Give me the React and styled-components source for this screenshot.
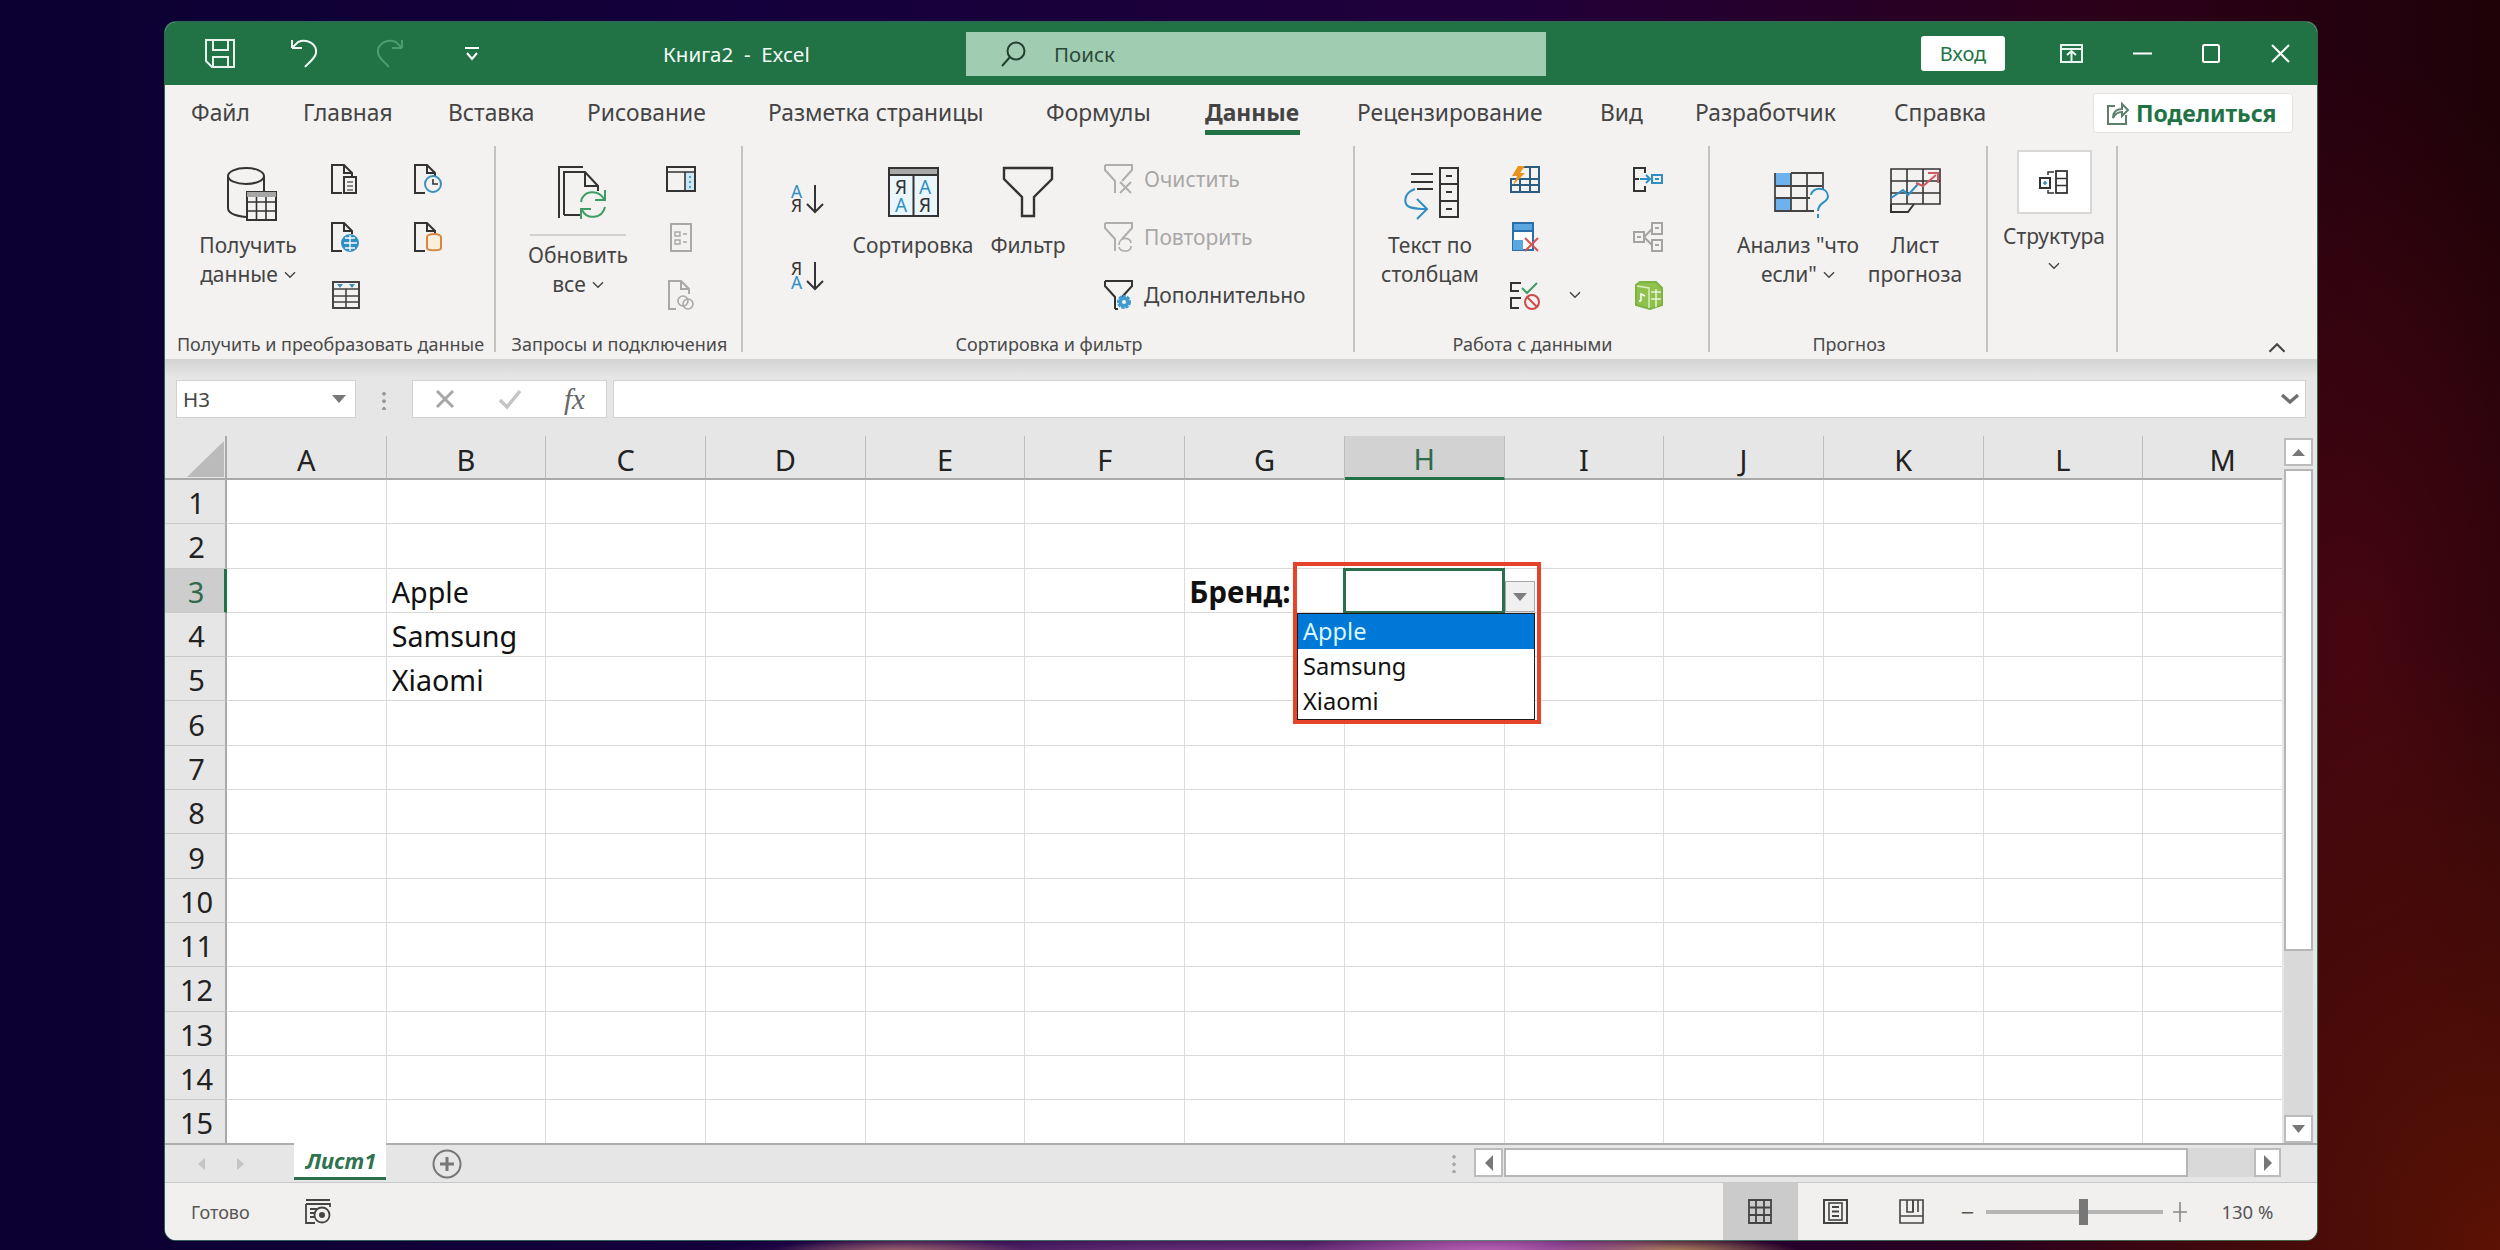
import React from 'react';
import styled, { createGlobalStyle } from 'styled-components';

const GREEN = '#217346';
const INK = '#333';
const BLUE = '#2f8fc4';
const FONT = '"Noto Sans", "Open Sans", sans-serif';

const Global = createGlobalStyle`
  html, body { margin: 0; width: 2500px; height: 1250px; overflow: hidden; }
  body { font-family: ${FONT}; }
  * { box-sizing: border-box; }
`;

const Page = styled.div`
  width: 2500px;
  height: 1250px;
  padding: 22px 0 0 165px;
  background:
    radial-gradient(ellipse 190px 34px at 1490px 1254px, #c266bb, rgba(190, 90, 170, 0) 100%),
    radial-gradient(ellipse 130px 16px at 1670px 1252px, #b98a5c, rgba(180, 130, 90, 0) 100%),
    radial-gradient(ellipse 130px 14px at 900px 1252px, #a86a70, rgba(160, 100, 110, 0) 100%),
    radial-gradient(ellipse 560px 30px at 1250px 1256px, #7a3a86, rgba(120, 40, 110, 0) 100%),
    radial-gradient(ellipse 520px 620px at 2500px 1250px, #5c1204, rgba(70, 10, 10, 0) 100%),
    radial-gradient(ellipse 300px 600px at 2350px 650px, #46060f, rgba(60, 6, 14, 0) 100%),
    linear-gradient(90deg, #0b0030 0%, #14003c 30%, #20003a 60%, #2c0018 85%, #1e0208 100%);
`;

const Window = styled.div`
  width: 2152px;
  height: 1218px;
  display: flex;
  flex-direction: column;
  background: #f3f2f1;
  border-radius: 11px;
  overflow: hidden;
  box-shadow: 0 0 0 1px rgba(70, 150, 110, 0.65);
`;

const TitleBar = styled.div`
  height: 63px;
  flex: none;
  background: ${GREEN};
  display: flex;
  align-items: center;
  padding-left: 40px;
  color: #fff;
`;

const Glyph = styled.svg`
  flex: none;
  display: block;
  overflow: visible;
  margin-left: ${p => p.$ml || 0}px;
`;

const Title = styled.div`
  margin-left: 184px;
  width: 151px;
  font-size: 20.5px;
  white-space: pre;
  color: #f4faf6;
`;

const Search = styled.div`
  margin-left: 152px;
  width: 580px;
  height: 44px;
  background: #a0ccb2;
  display: flex;
  align-items: center;
  padding-left: 35px;
  gap: 28px;
  color: #2a4a38;
  font-size: 20.5px;
`;

const SignIn = styled.div`
  margin-left: 375px;
  width: 84px;
  height: 35px;
  background: #fff;
  border-radius: 3px;
  color: ${GREEN};
  font-size: 20px;
  display: flex;
  align-items: center;
  justify-content: center;
`;

const TabsRow = styled.div`
  height: 56px;
  flex: none;
  display: flex;
  align-items: center;
  padding-left: 26px;
`;

const Tab = styled.div`
  width: ${p => p.$w}px;
  flex: none;
  height: 56px;
  line-height: 55px;
  font-size: 22.8px;
  color: #444;
  font-weight: ${p => (p.$active ? 700 : 400)};
`;

const TabLabel = styled.span`
  position: relative;
  display: inline-block;
  height: 50px;
  ${p =>
    p.$active &&
    `
    &::after {
      content: '';
      position: absolute;
      left: 0;
      right: -1px;
      top: 45px;
      height: 5px;
      background: ${GREEN};
    }
  `}
`;

const Share = styled.div`
  margin-left: auto;
  margin-right: 24px;
  width: 200px;
  height: 40px;
  background: #fff;
  border: 1px solid #e3e2e0;
  border-radius: 3px;
  display: flex;
  align-items: center;
  padding-left: 13px;
  gap: 7px;
  color: ${GREEN};
  font-size: 23px;
  font-weight: 700;
`;

const Ribbon = styled.div`
  height: 218px;
  flex: none;
  display: flex;
  padding-top: 5px;
  background: #f3f2f1;
  position: relative;
  z-index: 1;
`;

const Group = styled.div`
  width: ${p => p.$w}px;
  height: 206px;
  flex: none;
  display: flex;
  flex-direction: column;
  border-right: 2px solid #c4c3c1;
`;

const GroupBody = styled.div`
  flex: 1;
  min-height: 0;
  display: flex;
  padding: 4px 0 0 ${p => p.$pl || 0}px;
`;

const GroupLabel = styled.div`
  height: 26px;
  margin-bottom: -6px;
  line-height: 25px;
  font-size: 18px;
  color: #4a4a4a;
  text-align: center;
  white-space: nowrap;
  margin-right: -2px;
`;

const BigButton = styled.div`
  width: ${p => p.$w}px;
  flex: none;
  margin-left: ${p => p.$ml || 0}px;
  display: flex;
  flex-direction: column;
  align-items: center;
`;

const BigIcon = styled.div`
  height: ${p => p.$h || 81}px;
  padding-top: ${p => p.$top || 17}px;
  margin-left: ${p => p.$shift || 0}px;
  flex: none;
`;

const BigText = styled.div`
  font-size: 21px;
  line-height: 29px;
  color: #444;
  text-align: center;
  white-space: nowrap;
`;

const RefreshRule = styled.div`
  width: 96px;
  height: 2px;
  background: #d2d1cf;
  margin-bottom: 5px;
`;

const Chevron = styled.svg`
  display: inline-block;
  margin-left: ${p => p.$ml ?? 6}px;
  vertical-align: ${p => p.$va ?? 3}px;
`;

const SmallColumn = styled.div`
  width: ${p => p.$w || 50}px;
  flex: none;
  margin-left: ${p => p.$ml || 0}px;
  padding-top: ${p => p.$top || 0}px;
  display: grid;
  grid-auto-rows: ${p => p.$row || 58}px;
  align-items: center;
  justify-items: center;
  align-content: start;
`;

const ActionList = styled.div`
  margin-left: ${p => p.$ml}px;
  display: grid;
  grid-auto-rows: 58px;
  align-content: start;
`;

const ActionRow = styled.div`
  display: flex;
  align-items: center;
  gap: 10px;
  font-size: 21px;
  white-space: nowrap;
  color: ${p => (p.$muted ? '#a9a8a6' : '#444')};
`;

const OutlineBox = styled.div`
  width: 75px;
  height: 64px;
  background: #fff;
  border: 2px solid #d8d7d5;
  display: flex;
  align-items: center;
  justify-content: center;
  margin-bottom: 8px;
  flex: none;
`;

const Collapse = styled.div`
  margin-left: 150px;
  align-self: flex-end;
  margin-bottom: 5px;
  display: flex;
`;

const FormulaBar = styled.div`
  height: 77px;
  flex: none;
  display: flex;
  align-items: flex-start;
  padding: 21px 11px 0;
  background: linear-gradient(#d3d3d3 0, #e6e6e6 18px);
`;

const NameBox = styled.div`
  width: 180px;
  height: 38px;
  background: #fff;
  border: 1px solid #d2d2d2;
  display: flex;
  align-items: center;
  justify-content: space-between;
  padding: 0 9px 0 6px;
  font-size: 20.5px;
  color: #444;
`;

const Grip = styled.div`
  margin: ${p => p.$t}px ${p => p.$mr}px 0 ${p => p.$ml}px;
  align-self: flex-start;
  width: 4px;
  height: 20px;
  flex: none;
  background: radial-gradient(circle 2px, ${p => p.$c || '#999'} 98%, transparent) center top / 4px 7.5px repeat-y;
`;

const FormulaButtons = styled.div`
  width: 195px;
  height: 38px;
  background: #fff;
  border: 1px solid #d2d2d2;
  display: flex;
  align-items: center;
  padding-left: 22px;
  color: #888;
`;

const FxMark = styled.span`
  margin-left: 42px;
  font-family: 'Liberation Serif', serif;
  font-style: italic;
  font-size: 29px;
  line-height: 30px;
  color: #666;
`;

const FormulaInput = styled.div`
  flex: 1;
  margin-left: 6px;
  height: 38px;
  background: #fff;
  border: 1px solid #d2d2d2;
  display: flex;
  align-items: center;
  justify-content: flex-end;
  padding-right: 6px;
`;

const Sheet = styled.div`
  height: 707px;
  flex: none;
  display: flex;
  background: #e6e6e6;
`;

const Grid = styled.div`
  position: relative;
  width: 2117px;
  flex: none;
  overflow: hidden;
  display: grid;
  grid-template-columns: 62px repeat(13, 159.7px);
  grid-template-rows: 44px repeat(15, 44.3px);
  background: #fff;
`;

const Corner = styled.div`
  background: #e6e6e6;
  border-right: 2px solid #a9a9a9;
  border-bottom: 2px solid #a9a9a9;
  display: flex;
  align-items: flex-end;
  justify-content: flex-end;
  padding: 0 0 1px;
`;

const ColHead = styled.div`
  background: ${p => (p.$on ? '#d2d2d2' : '#e6e6e6')};
  border-right: 1px solid #bdbdbd;
  border-bottom: ${p => (p.$on ? `3px solid ${GREEN}` : '2px solid #a9a9a9')};
  display: flex;
  align-items: center;
  justify-content: center;
  padding-top: 4px;
  font-size: 29px;
  color: ${p => (p.$on ? '#2d6b4b' : '#222')};
`;

const RowHead = styled.div`
  background: ${p => (p.$on ? '#cdcdcd' : '#e6e6e6')};
  border-right: ${p => (p.$on ? `3px solid ${GREEN}` : '2px solid #a9a9a9')};
  border-bottom: 1px solid #c9c9c9;
  display: flex;
  align-items: center;
  justify-content: center;
  padding: 2px 0 0 3px;
  font-size: 29px;
  color: ${p => (p.$on ? '#2d6b4b' : '#222')};
`;

const Cell = styled.div`
  border-right: 1px solid #dcdcdc;
  border-bottom: 1px solid #d9d9d9;
  display: flex;
  align-items: center;
  padding: 2px 0 0 ${p => (p.$bold ? 4 : 5)}px;
  font-size: ${p => (p.$bold ? 29.5 : 28.7)}px;
  font-weight: ${p => (p.$bold ? 700 : 400)};
  color: #111;
  white-space: nowrap;
`;

const Selection = styled.div`
  position: absolute;
  left: 1178px;
  top: 132px;
  width: 162px;
  height: 46px;
  border: 3px solid #2b6e4c;
`;

const DropToggle = styled.div`
  position: absolute;
  left: 1340px;
  top: 145px;
  width: 30px;
  height: 31px;
  background: #f0f0f0;
  border: 1px solid #a8a8a8;
  display: flex;
  align-items: center;
  justify-content: center;
`;

const DropList = styled.div`
  position: absolute;
  left: 1132px;
  top: 177px;
  width: 238px;
  height: 107px;
  background: #fff;
  border: 1px solid #1a1a1a;
  font-size: 23.6px;
`;

const DropItem = styled.div`
  height: 35px;
  line-height: 35px;
  padding-left: 5px;
  background: ${p => (p.$on ? '#0078d7' : 'transparent')};
  color: ${p => (p.$on ? '#d8f6ff' : '#111')};
`;

const Highlight = styled.div`
  position: absolute;
  left: 1128px;
  top: 126px;
  width: 248px;
  height: 162px;
  border: 4px solid #e5432a;
  pointer-events: none;
`;

const VScroll = styled.div`
  width: 35px;
  flex: none;
  display: flex;
  flex-direction: column;
  padding: 2px 4px 0 2px;
`;

const ScrollBtn = styled.div`
  flex: none;
  width: ${p => p.$w || 'auto'};
  height: ${p => p.$h || 'auto'};
  background: #fff;
  border: 2px solid #bcbcbc;
  display: flex;
  align-items: center;
  justify-content: center;
`;

const VThumb = styled.div`
  height: 482px;
  flex: none;
  margin-top: 3px;
  background: #fff;
  border: 2px solid #b5b5b5;
`;

const VTrack = styled.div`
  flex: 1;
  background: #d9d9d9;
`;

const TabBar = styled.div`
  height: 40px;
  flex: none;
  background: #e6e6e6;
  border-top: 2px solid #adadad;
  border-bottom: 1px solid #c9c9c9;
  display: flex;
  align-items: center;
  padding-left: 32px;
`;

const SheetTab = styled.div`
  align-self: flex-start;
  margin-left: 49px;
  margin-top: -2px;
  width: 92px;
  height: 37px;
  background: #fff;
  border-bottom: 3px solid #2b6e4c;
  color: #2f7350;
  padding-left: 2px;
  font-size: 22px;
  font-weight: 700;
  font-style: italic;
  display: flex;
  align-items: center;
  justify-content: center;
`;

const HScroll = styled.div`
  align-self: flex-start;
  margin-top: 3px;
  width: 807px;
  height: 29px;
  flex: none;
  display: flex;
`;

const HThumb = styled.div`
  width: 684px;
  flex: none;
  background: #fff;
  border: 2px solid #b5b5b5;
  margin-left: 1px;
`;

const HTrack = styled.div`
  flex: 1;
  background: #d9d9d9;
`;

const StatusBar = styled.div`
  flex: 1;
  display: flex;
  align-items: center;
  background: #f1f0ef;
  padding-left: 26px;
`;

const StatusText = styled.div`
  font-size: ${p => p.$size || 18}px;
  color: #555;
  margin-left: ${p => p.$ml || 0}px;
  white-space: nowrap;
`;

const ViewBtn = styled.div`
  height: 57px;
  width: ${p => p.$w}px;
  margin-left: ${p => p.$ml || 0}px;
  flex: none;
  background: ${p => (p.$on ? '#cbcbcb' : 'transparent')};
  display: flex;
  align-items: center;
  justify-content: center;
`;

const ZoomTrack = styled.div`
  position: relative;
  margin-left: 12px;
  width: 177px;
  height: 4px;
  flex: none;
  background: #b5b5b5;
`;

const ZoomThumb = styled.div`
  position: absolute;
  left: 93px;
  top: -11px;
  width: 9px;
  height: 26px;
  background: #777;
`;

const Ico = ({ w, h, ml, stroke = INK, sw = 2, children }) => (
  <Glyph
    $ml={ml}
    width={w}
    height={h}
    viewBox={`0 0 ${w} ${h}`}
    fill="none"
    stroke={stroke}
    strokeWidth={sw}
  >
    {children}
  </Glyph>
);

const SmallChev = ({ up, ml, va, size = 12, c = '#444' }) => (
  <Chevron $ml={ml} $va={va} width={size} height={size * 0.7} viewBox="0 0 12 8" fill="none" stroke={c} strokeWidth="1.4">
    <path d={up ? 'M1 7L6 2L11 7' : 'M1 1L6 6L11 1'} />
  </Chevron>
);

const Tri = ({ dir = 'down', c = '#777', w = 14, h = 8 }) => {
  const pts = {
    down: `0,0 ${w},0 ${w / 2},${h}`,
    up: `0,${h} ${w},${h} ${w / 2},0`,
    left: `${w},0 ${w},${h} 0,${h / 2}`,
    right: `0,0 0,${h} ${w},${h / 2}`,
  }[dir];
  return (
    <svg width={w} height={h} viewBox={`0 0 ${w} ${h}`}>
      <polygon points={pts} fill={c} />
    </svg>
  );
};

const FileBase = ({ c = INK, children }) => (
  <Ico w={30} h={30} stroke={c}>
    <path d="M11 29H1V1H13L21 9V12M13 1V9H21" />
    {children}
  </Ico>
);

// two stacked letters of a sort icon, one text so the pair stays together
const LetterStack = ({ x, y, step, size, top, bottom, topColor, bottomColor }) => (
  <text x={x} y={y} stroke="none" fontSize={size} fontFamily={FONT}>
    <tspan x={x} fill={topColor}>{top}</tspan>
    <tspan x={x} dy={step} fill={bottomColor}>{bottom}</tspan>
  </text>
);

const DbTableIcon = () => (
  <Ico w={50} h={54}>
    <ellipse cx="19" cy="9" rx="18" ry="8" />
    <path d="M1 9V41C1 46 9 49 19 50M37 9V24" />
    <rect x="20" y="25" width="29" height="28" fill="#f3f2f1" />
    <rect x="20" y="25" width="29" height="5" fill="#a6a6a6" stroke="none" />
    <path d="M20 35H49M20 44H49M29.5 30V53M39 30V53" strokeWidth="1.6" />
  </Ico>
);

const RefreshIcon = () => (
  <Ico w={51} h={54}>
    <path d="M1 52V1H25" />
    <path d="M6 49V6H27L40 20V25M27 6V20H40M6 49H22" />
    <g stroke="#3f9d63">
      <path d="M23 36C25 24 40 23 46 33" />
      <path d="M47 24V34H37" />
      <path d="M47 41C44 53 29 54 24 44" />
      <path d="M23 53V43H33" />
    </g>
  </Ico>
);

const SortSmall = ({ flip }) => (
  <Ico w={32} h={30}>
    <LetterStack
      x={0}
      y={14}
      step={14}
      size={17.5}
      top={flip ? 'Я' : 'А'}
      bottom={flip ? 'А' : 'Я'}
      topColor={flip ? INK : BLUE}
      bottomColor={flip ? BLUE : INK}
    />
    <path d="M24 1V28M16 20L24 28L32 20" />
  </Ico>
);

const SortBig = () => (
  <Ico w={51} h={50}>
    <rect x="1" y="1" width="49" height="48" fill="#eaf6fb" />
    <rect x="1" y="1" width="49" height="7" fill="#a9a9a9" />
    <path d="M25.5 8V49" />
    <LetterStack x={7} y={27} step={18} size={19} top="Я" bottom="А" topColor={INK} bottomColor={BLUE} />
    <LetterStack x={31} y={27} step={18} size={19} top="А" bottom="Я" topColor={BLUE} bottomColor={INK} />
  </Ico>
);

const FunnelBig = () => (
  <Ico w={50} h={50} sw={2.4}>
    <path d="M1 1H49V12L31 30V49H19V30L1 12Z" />
  </Ico>
);

const FunnelSmall = ({ c = INK, children }) => (
  <Ico w={30} h={30} stroke={c}>
    <path d="M1 1H28V6L18 17M1 1V6L11 17V29" />
    {children}
  </Ico>
);

const TextColumnsIcon = () => (
  <Ico w={57} h={54}>
    <path d="M9 7H31M9 15H31M15 22H31" />
    <rect x="38" y="1" width="18" height="49" />
    <path d="M38 17H56M38 34H56M44 9H50M44 25H50M44 42H50" />
    <path d="M13 22C4 25 2 32 4 37C6 41 12 42 25 42M15 32L25 42L15 52" stroke={BLUE} />
  </Ico>
);

const FlashFillIcon = () => (
  <Ico w={30} h={27}>
    <path d="M12 1H29V26H1V13H29M20 1V26M10 13V26M1 19H29" stroke="#2b5d80" />
    <polygon points="8,0 15,0 10,7 15,7 3,19 7,10 2,10" fill="#e8941c" stroke="none" />
  </Ico>
);

const RemoveDupIcon = () => (
  <Ico w={27} h={30}>
    <rect x="1" y="1" width="20" height="27" stroke="#2b6fa8" fill="#fff" />
    <rect x="1" y="1" width="20" height="8" fill="#5aa7e0" stroke="#2b6fa8" />
    <rect x="1" y="18" width="10" height="10" fill="#5aa7e0" stroke="none" />
    <path d="M13 16L26 29M26 16L13 29" stroke="#d9534f" />
  </Ico>
);

const ValidateIcon = () => (
  <Ico w={30} h={29}>
    <path d="M11 2H1V10H9M11 17H1V27H9" />
    <path d="M12 7L17 12L27 2" stroke="#3f9d63" />
    <circle cx="22" cy="21" r="7" stroke="#cf4a4a" />
    <path d="M17 16L27 26" stroke="#cf4a4a" />
  </Ico>
);

const ConsolidateIcon = () => (
  <Ico w={30} h={25}>
    <path d="M12 6V1H1V24H12V19M1 12H6" />
    <path d="M7 12H17M13 8L17 12L13 16" stroke={BLUE} />
    <rect x="19" y="8" width="10" height="8" stroke={BLUE} />
    <path d="M22 12H26" stroke={BLUE} />
  </Ico>
);

const RelationsIcon = () => (
  <Ico w={30} h={30} stroke="#a3a3a3">
    <rect x="1" y="10" width="10" height="10" />
    <rect x="19" y="1" width="10" height="11" />
    <rect x="19" y="18" width="10" height="11" />
    <path d="M11 15L19 7M11 15L19 23M4 15H8M22 6H26M22 23H26" />
  </Ico>
);

const ModelIcon = () => (
  <Ico w={30} h={30} stroke="#7cb342">
    <path d="M7 2L23 2L29 8V25L17 29L3 25V5Z" fill="#8fc14c" stroke="#7cb342" />
    <path d="M4 6L16 8V28" stroke="#d9edbd" strokeWidth="1.5" />
    <path d="M18 12H28M18 19H28M23 9V27" stroke="#e7f4d6" strokeWidth="1.5" />
    <path d="M8 21V14L12 16M8 21H6" stroke="#fff" strokeWidth="1.5" />
  </Ico>
);

const WhatIfIcon = () => (
  <Ico w={55} h={49} stroke="#444">
    <rect x="1" y="1" width="16" height="13" fill="#6db2ec" stroke="none" />
    <rect x="1" y="26" width="16" height="13" fill="#6db2ec" stroke="none" />
    <path d="M17 1H49V17M1 1V39H40M1 14H48M1 26H36M17 1V39M33 1V39" strokeWidth="1.8" />
    <path d="M37 23C38 15 53 14 54 24C54 31 44 30 44 39M44 42V46" stroke={BLUE} />
  </Ico>
);

const ForecastIcon = () => (
  <Ico w={51} h={45}>
    <path d="M1 1H50V36H1ZM17 1V36M33 1V36M1 13H50M1 25H50" strokeWidth="1.6" />
    <path d="M1 36V44H18L24 36" />
    <path d="M1 30L13 22L18 27L29 15" stroke={BLUE} />
    <path d="M26 15L33 18L46 7M38 5H48V15" stroke="#cc5a62" />
  </Ico>
);

const OutlineIcon = () => (
  <Ico w={30} h={25}>
    <rect x="1" y="8" width="10" height="10" />
    <path d="M8 13H4M6 11V15" stroke={BLUE} strokeWidth="1.6" />
    <path d="M15 2H9V5M15 23H9V20" strokeWidth="1.5" />
    <rect x="17" y="1" width="11" height="22" strokeWidth="1.8" />
    <path d="M17 8.5H28M17 15.5H28" strokeWidth="1.5" />
  </Ico>
);

const ROWS = [1, 2, 3, 4, 5, 6, 7, 8, 9, 10, 11, 12, 13, 14, 15];
const COLS = ['A', 'B', 'C', 'D', 'E', 'F', 'G', 'H', 'I', 'J', 'K', 'L', 'M'];
const TABS = [
  ['Файл', 112],
  ['Главная', 145],
  ['Вставка', 139],
  ['Рисование', 181],
  ['Разметка страницы', 278],
  ['Формулы', 159],
  ['Данные', 152],
  ['Рецензирование', 243],
  ['Вид', 95],
  ['Разработчик', 199],
  ['Справка', 100],
];
const CELLS = {
  B3: { text: 'Apple' },
  B4: { text: 'Samsung' },
  B5: { text: 'Xiaomi' },
  G3: { text: 'Бренд:', bold: true },
};

export default function App() {
  return (
    <Page>
      <Global />
      <Window>
        <TitleBar>
          <Ico w={30} h={29} stroke="#e7f3ec">
            <path d="M1 1H29V28H7L1 22Z" />
            <path d="M8 1V11H23V1M8 28V18H23V28" />
          </Ico>
          <Ico w={28} h={29} ml={56} stroke="#f0f7f3">
            <path d="M1 9H11M1 9V1" />
            <path d="M1 9L7 3C16 -1 26 5 25 14C24 20 17 24 14 28" />
          </Ico>
          <Ico w={26} h={29} ml={58} stroke="#4e9a72">
            <path d="M25 9H15M25 9V1" />
            <path d="M25 9L19 3C10 -1 0 5 1 14C2 20 9 24 12 28" />
          </Ico>
          <Ico w={14} h={14} ml={62} stroke="#fff">
            <path d="M0 1H14" />
            <path d="M2 6L7 12L12 6" />
          </Ico>
          <Title>{'Книга2  -  Excel'}</Title>
          <Search>
            <Ico w={25} h={26} stroke="#23402f">
              <circle cx="15" cy="10" r="8.5" />
              <path d="M9 16L1 25" />
            </Ico>
            Поиск
          </Search>
          <SignIn>Вход</SignIn>
          <Ico w={23} h={19} ml={55} stroke="#eaf5ef">
            <path d="M1 1H22V18H1ZM1 5H22" />
            <path d="M11.5 17V8M7 11L11.5 7L16 11" />
          </Ico>
          <Ico w={19} h={3} ml={50} stroke="#fff">
            <path d="M0 1.5H19" />
          </Ico>
          <Ico w={18} h={19} ml={50} stroke="#fff">
            <rect x="1" y="1" width="16" height="17" rx="1.5" />
          </Ico>
          <Ico w={19} h={19} ml={51} stroke="#fff">
            <path d="M1 1L18 18M18 1L1 18" />
          </Ico>
        </TitleBar>

        <TabsRow>
          {TABS.map(([label, w]) => (
            <Tab key={label} $w={w} $active={label === 'Данные'}>
              <TabLabel $active={label === 'Данные'}>{label}</TabLabel>
            </Tab>
          ))}
          <Share>
            <Ico w={22} h={24} stroke="#5d7f6c">
              <path d="M8 5H1V23H19V14" />
              <path d="M6 17C6 10 11 8 15 8V3L21 9L15 15V11C11 11 8 13 6 17Z" />
            </Ico>
            Поделиться
          </Share>
        </TabsRow>

        <Ribbon>
          <Group $w={331}>
            <GroupBody $pl={33}>
              <BigButton $w={100}>
                <BigIcon $shift={8}>
                  <DbTableIcon />
                </BigIcon>
                <BigText>
                  Получить
                  <br />
                  данные
                  <SmallChev />
                </BigText>
              </BigButton>
              <SmallColumn $ml={23}>
                <FileBase>
                  <rect x="13" y="13" width="12" height="16" fill="#f3f2f1" />
                  <path d="M16 18H22M16 22H22M16 26H22" strokeWidth="1.5" stroke="#666" />
                </FileBase>
                <FileBase>
                  <circle cx="19" cy="21" r="8" fill="#2f8fc4" stroke="#2f8fc4" />
                  <path d="M13 21H26M19 13V29M14 16H24M14 26H24" stroke="#fff" strokeWidth="1.3" />
                </FileBase>
                <Ico w={28} h={28} stroke="#444">
                  <rect x="1" y="1" width="26" height="26" />
                  <path d="M1 8H27M1 15H27M1 21H27M14 8V27" strokeWidth="1.6" />
                  <polygon points="5,3 11,3 8,7" fill="#3e8db4" stroke="none" />
                  <polygon points="17,3 23,3 20,7" fill="#3e8db4" stroke="none" />
                </Ico>
              </SmallColumn>
              <SmallColumn $ml={33}>
                <FileBase>
                  <circle cx="19" cy="20" r="8" fill="#f3f2f1" stroke="#3c8fbf" />
                  <path d="M19 15V20H24" strokeWidth="1.6" />
                </FileBase>
                <FileBase>
                  <ellipse cx="20" cy="15" rx="7" ry="3" fill="#f3f2f1" stroke="#d8863c" />
                  <path d="M13 15V26C13 29 27 29 27 26V15" stroke="#d8863c" fill="#fbeedd" />
                </FileBase>
              </SmallColumn>
            </GroupBody>
            <GroupLabel>Получить и преобразовать данные</GroupLabel>
          </Group>

          <Group $w={247}>
            <GroupBody $pl={32}>
              <BigButton $w={100}>
                <BigIcon $h={84} $top={16} $shift={10}>
                  <RefreshIcon />
                </BigIcon>
                <RefreshRule />
                <BigText>
                  Обновить
                  <br />
                  все
                  <SmallChev />
                </BigText>
              </BigButton>
              <SmallColumn $ml={28}>
                <Ico w={30} h={26}>
                  <rect x="1" y="1" width="28" height="24" />
                  <rect x="19" y="6" width="9" height="18" fill="#cde6f5" stroke="none" />
                  <path d="M1 6H29M19 6V25" strokeWidth="1.6" />
                  <path d="M24 10V12M24 15V17M24 20V22" stroke={BLUE} strokeWidth="1.6" />
                </Ico>
                <Ico w={22} h={29} stroke="#a8a8a8">
                  <rect x="1" y="1" width="20" height="27" />
                  <path d="M5 9H10V13H5ZM5 17H10V21H5ZM13 11H17M13 19H17" strokeWidth="1.4" />
                </Ico>
                <Ico w={26} h={30} stroke="#a8a8a8">
                  <path d="M8 29H1V1H13L21 9V14M13 1V9H21" />
                  <circle cx="15" cy="21" r="5" strokeWidth="1.6" />
                  <circle cx="20" cy="24" r="5" strokeWidth="1.6" />
                </Ico>
              </SmallColumn>
            </GroupBody>
            <GroupLabel>Запросы и подключения</GroupLabel>
          </Group>

          <Group $w={612}>
            <GroupBody $pl={39}>
              <SmallColumn $top={10} $row={77}>
                <SortSmall />
                <SortSmall flip />
              </SmallColumn>
              <BigButton $w={124} $ml={19}>
                <BigIcon>
                  <SortBig />
                </BigIcon>
                <BigText>Сортировка</BigText>
              </BigButton>
              <BigButton $w={90} $ml={8}>
                <BigIcon>
                  <FunnelBig />
                </BigIcon>
                <BigText>Фильтр</BigText>
              </BigButton>
              <ActionList $ml={31}>
                <ActionRow $muted>
                  <FunnelSmall c="#aeaeae">
                    <path d="M16 18L27 29M27 18L16 29" />
                  </FunnelSmall>
                  Очистить
                </ActionRow>
                <ActionRow $muted>
                  <FunnelSmall c="#aeaeae">
                    <path d="M15 23C15 14 27 15 27 21M27 24C27 31 16 30 15 25" strokeWidth="1.6" />
                  </FunnelSmall>
                  Повторить
                </ActionRow>
                <ActionRow>
                  <FunnelSmall>
                    <path d="M11 29H14" />
                    <circle cx="20" cy="22" r="5.5" fill="#3f9bd0" stroke="#3f9bd0" strokeDasharray="3 1" strokeWidth="3" />
                    <circle cx="20" cy="22" r="2" fill="#f3f2f1" stroke="none" />
                  </FunnelSmall>
                  Дополнительно
                </ActionRow>
              </ActionList>
            </GroupBody>
            <GroupLabel>Сортировка и фильтр</GroupLabel>
          </Group>

          <Group $w={355}>
            <GroupBody $pl={20}>
              <BigButton $w={110}>
                <BigIcon>
                  <TextColumnsIcon />
                </BigIcon>
                <BigText>
                  Текст по
                  <br />
                  столбцам
                </BigText>
              </BigButton>
              <SmallColumn $ml={15}>
                <FlashFillIcon />
                <RemoveDupIcon />
                <ValidateIcon />
              </SmallColumn>
              <SmallColumn $w={30} $ml={10}>
                <span />
                <span />
                <SmallChev ml={0} va={0} />
              </SmallColumn>
              <SmallColumn $ml={33}>
                <ConsolidateIcon />
                <RelationsIcon />
                <ModelIcon />
              </SmallColumn>
            </GroupBody>
            <GroupLabel>Работа с данными</GroupLabel>
          </Group>

          <Group $w={278}>
            <GroupBody $pl={26}>
              <BigButton $w={124}>
                <BigIcon $top={22} $shift={6}>
                  <WhatIfIcon />
                </BigIcon>
                <BigText>
                  Анализ "что
                  <br />
                  если"
                  <SmallChev />
                </BigText>
              </BigButton>
              <BigButton $w={90} $ml={10}>
                <BigIcon $top={18}>
                  <ForecastIcon />
                </BigIcon>
                <BigText>
                  Лист
                  <br />
                  прогноза
                </BigText>
              </BigButton>
            </GroupBody>
            <GroupLabel>Прогноз</GroupLabel>
          </Group>

          <Group $w={130}>
            <GroupBody $pl={11}>
              <BigButton $w={110}>
                <OutlineBox>
                  <OutlineIcon />
                </OutlineBox>
                <BigText>
                  Структура
                  <br />
                  <SmallChev ml={0} />
                </BigText>
              </BigButton>
            </GroupBody>
          </Group>

          <Collapse>
            <SmallChev up size={18} ml={0} va={0} />
          </Collapse>
        </Ribbon>

        <FormulaBar>
          <NameBox>
            H3
            <Tri />
          </NameBox>
          <Grip $t={10} $ml={26} $mr={26} />
          <FormulaButtons>
            <Ico w={20} h={20} stroke="#a6a6a6" sw={3}>
              <path d="M2 2L18 18M18 2L2 18" />
            </Ico>
            <Ico w={24} h={20} ml={43} stroke="#c4c4c4" sw={3.4}>
              <path d="M2 11L9 18L22 2" />
            </Ico>
            <FxMark>fx</FxMark>
          </FormulaButtons>
          <FormulaInput>
            <Ico w={18} h={12} stroke="#6f6f6f" sw={3.2}>
              <path d="M1 2L9 9L17 2" />
            </Ico>
          </FormulaInput>
        </FormulaBar>

        <Sheet>
          <Grid>
            <Corner>
              <svg width="38" height="36" viewBox="0 0 38 36">
                <polygon points="37,0 37,36 0,36" fill="#bbb" />
              </svg>
            </Corner>
            {COLS.map(c => (
              <ColHead key={c} $on={c === 'H'}>
                {c}
              </ColHead>
            ))}
            {ROWS.map(r => (
              <React.Fragment key={r}>
                <RowHead $on={r === 3}>{r}</RowHead>
                {COLS.map(c => {
                  const cell = CELLS[`${c}${r}`];
                  return (
                    <Cell key={c} $bold={cell && cell.bold}>
                      {cell && cell.text}
                    </Cell>
                  );
                })}
              </React.Fragment>
            ))}
            <Selection />
            <DropToggle>
              <Tri c="#7f7f7f" />
            </DropToggle>
            <DropList>
              <DropItem $on>Apple</DropItem>
              <DropItem>Samsung</DropItem>
              <DropItem>Xiaomi</DropItem>
            </DropList>
            <Highlight />
          </Grid>
          <VScroll>
            <ScrollBtn $h="28px">
              <Tri dir="up" c="#777" w={13} h={7} />
            </ScrollBtn>
            <VThumb />
            <VTrack />
            <ScrollBtn $h="28px">
              <Tri c="#777" w={13} h={8} />
            </ScrollBtn>
          </VScroll>
        </Sheet>

        <TabBar>
          <Ico w={10} h={14} ml={0} stroke="none">
            <polygon points="8,1 8,13 1,7" fill="#c4c4c4" />
          </Ico>
          <Ico w={10} h={14} ml={28} stroke="none">
            <polygon points="2,1 2,13 9,7" fill="#c4c4c4" />
          </Ico>
          <SheetTab>Лист1</SheetTab>
          <Ico w={30} h={30} ml={46} stroke="#777">
            <circle cx="15" cy="15" r="13.5" />
            <path d="M15 8V22M8 15H22" strokeWidth="3" />
          </Ico>
          <Grip $t={8} $ml={990} $mr={18} $c="#aaa" />
          <HScroll>
            <ScrollBtn $w="29px">
              <Tri dir="left" c="#777" w={8} h={16} />
            </ScrollBtn>
            <HThumb />
            <HTrack />
            <ScrollBtn $w="27px">
              <Tri dir="right" c="#777" w={8} h={16} />
            </ScrollBtn>
          </HScroll>
        </TabBar>

        <StatusBar>
          <StatusText>Готово</StatusText>
          <Ico w={26} h={25} ml={55} stroke="#444" sw={1.8}>
            <path d="M1 1H25M1 5H25M1 5V24H10M5 10H12M5 14H9M5 18H9M17 5H25V8" />
            <circle cx="17" cy="16" r="7.5" />
            <circle cx="17" cy="16" r="3" fill="#444" stroke="none" />
          </Ico>
          <ViewBtn $w={75} $ml={1392} $on>
            <Ico w={24} h={25} stroke="#444" sw={1.8}>
              <path d="M1 1H23V24H1ZM1 8.5H23M1 16H23M8 1V24M16 1V24" />
            </Ico>
          </ViewBtn>
          <Ico w={25} h={25} ml={25} stroke="#444">
            <rect x="1" y="1" width="23" height="23" />
            <rect x="6" y="4" width="13" height="17" strokeWidth="1.6" />
            <path d="M9 8H16M9 12.5H16M9 17H16" strokeWidth="1.8" />
          </Ico>
          <Ico w={25} h={25} ml={51} stroke="#444" sw={1.6}>
            <path d="M1 1H24V24H1ZM1 17H24M8 1V13H14V1" />
            <path d="M14 1V13M19 1V13" />
          </Ico>
          <StatusText $size={24} $ml={37}>−</StatusText>
          <ZoomTrack>
            <ZoomThumb />
          </ZoomTrack>
          <Ico w={16} h={22} ml={9} stroke="#888" sw={1.6}>
            <path d="M8 1V21M1 11H15" />
          </Ico>
          <StatusText $ml={33} $size={18.5}>130 %</StatusText>
        </StatusBar>
      </Window>
    </Page>
  );
}
